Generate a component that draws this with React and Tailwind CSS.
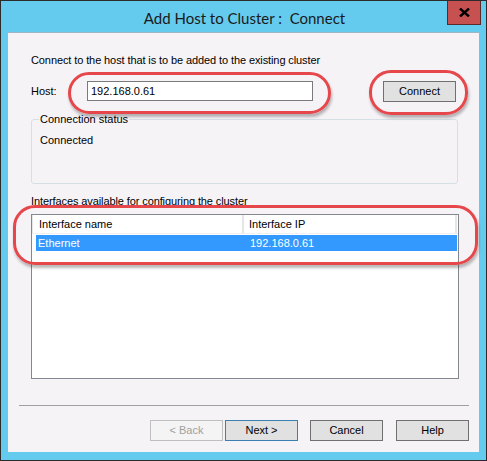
import React from 'react';

const sans = { fontFamily: '"Liberation Sans", Arial, sans-serif' };

const Btn = ({ children, kind = 'normal', className = '' }) => {
    const styles = {
        normal: 'border-[#707070] bg-[#e1e1e1] text-black',
        default: 'border-[#3c7fb1] bg-[#e1e1e1] text-black',
        disabled: 'border-[#bfbfbf] bg-[#f4f4f4] text-[#a0a0a0]',
    };
    return (
        <button
            type="button"
            className={`w-[73px] h-[21px] border text-[11px] leading-[13px] flex items-center justify-center ${styles[kind]} ${className}`}
        >
            {children}
        </button>
    );
};

// red hand-drawn style marker around a control
const Marker = ({ className }) => (
    <div
        className={`absolute border-[3px] border-[#e5474b] rounded-[22px] shadow-[1px_3px_3px_rgba(0,0,0,0.28)] pointer-events-none ${className}`}
    ></div>
);

const App = () => {
    return (
        <div className="w-[487px] h-[461px] bg-[#65cbee] border border-[#2b2b2b] flex flex-col overflow-hidden" style={sans}>
            {/* Title bar */}
            <div className="relative h-[31px] flex items-center justify-center">
                <span
                    className="text-[15px] text-[#1a1a1a] mt-[3px] ml-[2px]"
                    style={{ fontFamily: 'Lato, "Noto Sans", sans-serif' }}
                >
                    Add Host to Cluster :&nbsp; Connect
                </span>
                <div className="absolute right-[5px] top-0 w-[34px] h-[24px] bg-[#c75050] border border-[#5a2a2a] border-t-0 flex items-center justify-center">
                    <svg width="11" height="9" viewBox="0 0 11 9">
                        <path d="M1 0.5 L10 8.5 M10 0.5 L1 8.5" stroke="#000" strokeWidth="2.4" />
                    </svg>
                </div>
            </div>

            {/* Client area */}
            <div className="relative mx-[7px] h-[420px] bg-[#f6f3f7] border-t border-[#9fb6c7] flex flex-col pl-[23px] pt-[21px] text-[11px] leading-[13px] text-black">
                <div className="tracking-[-0.1px]">Connect to the host that is to be added to the existing cluster</div>

                <div className="flex items-start mt-[14px] h-[21px]">
                    <div className="w-[56px] h-[20px] flex items-center">Host:</div>
                    <div className="w-[226px] h-[20px] border border-[#7a7a7a] bg-white flex items-center pl-[3px]">
                        192.168.0.61
                    </div>
                    <Btn className="ml-[70px]">Connect</Btn>
                </div>

                <div className="relative mt-[17px] w-[427px] h-[65px] border border-[#d5dfe5] rounded-[3px] pl-[8px] pt-[14px]">
                    <span className="absolute -top-[7px] left-[7px] px-[1px] bg-[#f6f3f7]">Connection status</span>
                    <div>Connected</div>
                </div>

                <div className="mt-[11px] tracking-[-0.1px]">Interfaces available for configuring the cluster</div>

                <div className="mt-[6px] w-[428px] h-[165px] border border-[#828790] bg-white flex flex-col">
                    <div className="flex h-[19px] border-b border-[#f0f0f0]">
                        <div className="w-[212px] pl-[6px] flex items-center border-r-2 border-[#e5e5e5] border-l border-l-[#e5e5e5]">Interface name</div>
                        <div className="flex-1 pl-[5px] flex items-center border-r-2 border-[#e5e5e5] mr-[1px]">Interface IP</div>
                    </div>
                    <div className="flex h-[16px] mt-[1px] ml-[4px] mr-[1px] bg-[#3399ff] text-white items-center">
                        <div className="w-[214px] pl-[2px]">Ethernet</div>
                        <div className="flex-1">192.168.0.61</div>
                    </div>
                </div>

                <div className="mt-[26px] -ml-[12px] w-[450px] h-px bg-[#a0a0a0]"></div>

                <div className="mt-[14px] flex justify-end pr-[10px]">
                    <Btn kind="disabled">&lt; Back</Btn>
                    <Btn kind="default" className="ml-[2px]">Next &gt;</Btn>
                    <Btn className="ml-[12px]">Cancel</Btn>
                    <Btn className="ml-[13px]">Help</Btn>
                </div>

                <Marker className="left-[60px] top-[39px] w-[263px] h-[42px]" />
                <Marker className="left-[361px] top-[37px] w-[99px] h-[45px]" />
                <Marker className="left-[5px] top-[172px] w-[465px] h-[60px]" />
            </div>
        </div>
    );
};

export default App;
